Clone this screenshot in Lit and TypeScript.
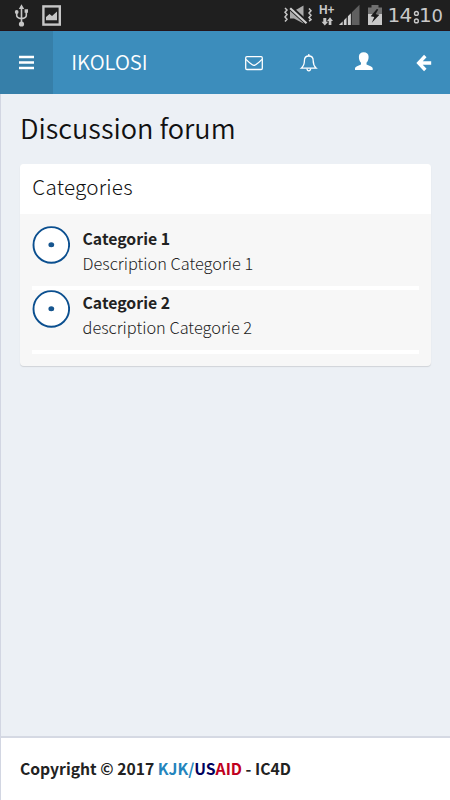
import { LitElement, html, css } from "lit";
import { customElement, property } from "lit/decorators.js";

@customElement("status-bar")
class StatusBar extends LitElement {
  static styles = css`
    :host { display: block; height: 31px; background: #1f1f1f; flex: none; }
    svg { display: block; }
    .clock { font: 20px "DejaVu Sans", "Liberation Sans", sans-serif; fill: #c9c9c9; }
    .zero { font-size: 18px; }
    .net { font: bold 13px "Liberation Sans", sans-serif; fill: #c9c9c9; }
  `;
  render() {
    return html`<svg width="450" height="31" viewBox="0 0 450 31">
      <rect y="30" width="450" height="1" fill="#24141a"></rect>
      <g stroke="#c6c6c6" fill="none" stroke-width="1.6">
        <path d="M21.5 8V23M16.7 13V15.5Q16.7 18 21.5 18.6Q26.3 18 26.3 15.5V12"></path>
        <path d="M21.5 4.2L24.2 9H18.8ZM24.6 9.3H28V12.7H24.6Z" fill="#c6c6c6" stroke="none"></path>
        <circle cx="16.7" cy="12" r="1.9" fill="#c6c6c6" stroke="none"></circle>
        <circle cx="21.5" cy="24" r="2.6" fill="#c6c6c6" stroke="none"></circle>
      </g>
      <rect x="43.4" y="6.4" width="16.4" height="18.2" fill="none" stroke="#c6c6c6" stroke-width="2.4"></rect>
      <path d="M46 20.3V17L49.5 14L52 16L57 11.5V20.3Z" fill="#c6c6c6"></path>
      <g>
        <path d="M290 11H294L303.5 5.5V23.5L294 18.5H290Z" fill="#aaa"></path>
        <path d="M290 7.5L306.5 22.5" stroke="#1f1f1f" stroke-width="5"></path>
        <path d="M290.2 8.3L306.5 23.2" stroke="#d0d0d0" stroke-width="2.2"></path>
        <path d="M285 8L287 10L285 12.3L287 14.6L285 17L287 19.3L285 21.5M309 8.5L311 10.7L309 13L311 15.3L309 17.6L311 19.7L309 21" fill="none" stroke="#c6c6c6" stroke-width="1.5"></path>
      </g>
      <text class="net" x="319" y="14" textLength="15.5" lengthAdjust="spacingAndGlyphs">H+</text>
      <path d="M323.3 18H326.3V21.7H328.2L324.8 25.5L321.5 21.7H323.3ZM328.7 25V21H327L330 17.2L333 21H331.4V25Z" fill="#c6c6c6"></path>
      <path d="M339 25L359.5 4.7V25Z" fill="#606060"></path>
      <path d="M339 25L342.7 21.5V25ZM344 25V20.2L346.5 17.7V25ZM348 25V16.2L350.8 13.4V25Z" fill="#d0d0d0"></path>
      <path d="M343.3 25V20M347.3 25V16M351.5 25V12" stroke="#1f1f1f" stroke-width=".8"></path>
      <path d="M371.5 5H378.5V7.5H382V25H368V7.5H371.5Z" fill="#707070"></path>
      <path d="M368 14H382V25H368Z" fill="#c9c9c9"></path>
      <path d="M376.8 9L370.7 16.2L374.3 17L371.8 22.8L379.5 14.8L375.7 14L378.3 9.6Z" fill="#1a1a1a"></path>
      <text class="clock" y="22.3"><tspan x="387.5">1</tspan><tspan x="399.5">4</tspan><tspan x="413">:</tspan><tspan x="419">1</tspan><tspan class="zero" x="431.5">0</tspan></text>
      <g fill="#1f1f1f" stroke="#c9c9c9" stroke-width="1.4">
        <circle cx="416.4" cy="13.4" r="1.9"></circle>
        <circle cx="416.4" cy="20.9" r="1.9"></circle>
      </g>
    </svg>`;
  }
}

@customElement("nav-bar")
class NavBar extends LitElement {
  static styles = css`
    :host { display: flex; height: 63px; background: #3c8dbc; color: #fff; flex: none; }
    svg { display: block; flex: none; }
    .menu { width: 52.5px; background: #367fa9; }
    .name { width: 176.5px; padding-left: 18.8px; box-sizing: border-box; line-height: 60px;
      font-family: "Noto Sans CJK SC", "Noto Sans", sans-serif; font-size: 20.3px; font-weight: 350; }
  `;
  render() {
    return html`<svg class="menu" width="52.5" height="63" viewBox="0 0 52.5 63">
        <path d="M19 26H34M19 31.5H34M19 37H34" stroke="#fff" stroke-width="2.6"></path>
      </svg>
      <div class="name">IKOLOSI</div>
      <svg width="221" height="63" viewBox="229 31 221 63">
        <g fill="none" stroke="#fff" stroke-width="1.3">
          <rect x="245.7" y="56.7" width="16.6" height="12.8" rx="1.2"></rect>
          <path d="M246 59.4Q249 62.5 252.3 64.8Q254 66 255.7 64.8Q259 62.5 262 59.4"></path>
          <path d="M301.3 68.2C303.6 66.2 304.4 64 304.4 60.8C304.4 57.7 306 56 308.8 56C311.6 56 313.2 57.7 313.2 60.8C313.2 64 314 66.2 316.2 68.2Z"></path>
          <path d="M308.8 54V56M306.9 68.5Q307.2 70.8 308.8 70.8T310.7 68.5"></path>
        </g>
        <path d="M355 70V68.2Q355 67 357 66.2L361 64.5V62.8C359.4 61.2 358.9 59 358.9 56.8C358.9 53.8 360.8 52.3 363.7 52.3S368.6 53.8 368.6 56.8C368.6 59 368 61.2 366.5 62.8V64.5L370.6 66.2Q372.7 67 372.7 68.2V70Z" fill="#fff"></path>
        <path d="M425.3 56L418.7 63L425.3 70M419.5 63H431.2" fill="none" stroke="#fff" stroke-width="3.4"></path>
      </svg>`;
  }
}

@customElement("category-row")
class CategoryRow extends LitElement {
  @property() name = "";
  @property() description = "";
  static styles = css`
    :host { display: flex; height: 60px; border-bottom: 4px solid #fff; }
    svg { display: block; flex: none; width: 38px; height: 38px; }
    .text { padding: 0 0 0 12.5px; font-family: "Noto Sans CJK SC", "Noto Sans", sans-serif;
      line-height: 25px; white-space: nowrap; }
    .name { font-size: 15.8px; font-weight: 700; color: #222; }
    .description { font-size: 16.35px; font-weight: 300; color: #222; }
  `;
  render() {
    return html`<svg viewBox="0 0 38 38">
        <circle cx="19.3" cy="18.9" r="17.8" fill="#fff" stroke="#0b4f8f" stroke-width="1.9"></circle>
        <ellipse cx="19.3" cy="18.7" rx="2.9" ry="2.5" fill="#17568f"></ellipse>
      </svg>
      <div class="text">
        <div class="name">${this.name}</div>
        <div class="description">${this.description}</div>
      </div>`;
  }
}

@customElement("app-root")
class AppRoot extends LitElement {
  static styles = css`
    :host { display: flex; flex-direction: column; height: 800px; overflow: hidden; background: #ecf0f5;
      font-family: "Noto Sans CJK SC", "Noto Sans", sans-serif; color: #222; }
    .page { flex: 1; display: flex; flex-direction: column; border-left: 1px solid #d2d6e2; }
    main { flex: 1; padding: 0 19px; }
    h1 { margin: 0; height: 70px; line-height: 67px; font-size: 27.1px; font-weight: 350; color: #111; white-space: nowrap; }
    .card { height: 202px; border-radius: 4px; background: #f7f7f7; overflow: hidden; box-shadow: 0 1px 1px rgba(0, 0, 0, .12); }
    h2 { margin: 0; height: 50px; line-height: 45px; padding-left: 12.3px; background: #fff; font-size: 20.7px; font-weight: 300; letter-spacing: .2px; color: #111; }
    .rows { padding: 12px 12px 0; }
    footer { height: 62px; border-top: 2px solid #d5d9e3; background: #fff; padding-left: 19px;
      line-height: 62px; font-size: 15.7px; font-weight: 700; white-space: nowrap; }
    .kjk { color: #2485bd; }
    .us { color: #00005c; }
    .aid { color: #c00020; }
  `;
  render() {
    return html`<status-bar></status-bar>
      <nav-bar></nav-bar>
      <div class="page">
        <main>
          <h1>Discussion forum</h1>
          <section class="card">
            <h2>Categories</h2>
            <div class="rows">
              <category-row name="Categorie 1" description="Description Categorie 1"></category-row>
              <category-row name="Categorie 2" description="description Categorie 2"></category-row>
            </div>
          </section>
        </main>
        <footer>Copyright © 2017 <span class="kjk">KJK/</span><span class="us">US</span><span class="aid">AID</span> - IC4D</footer>
      </div>`;
  }
}
